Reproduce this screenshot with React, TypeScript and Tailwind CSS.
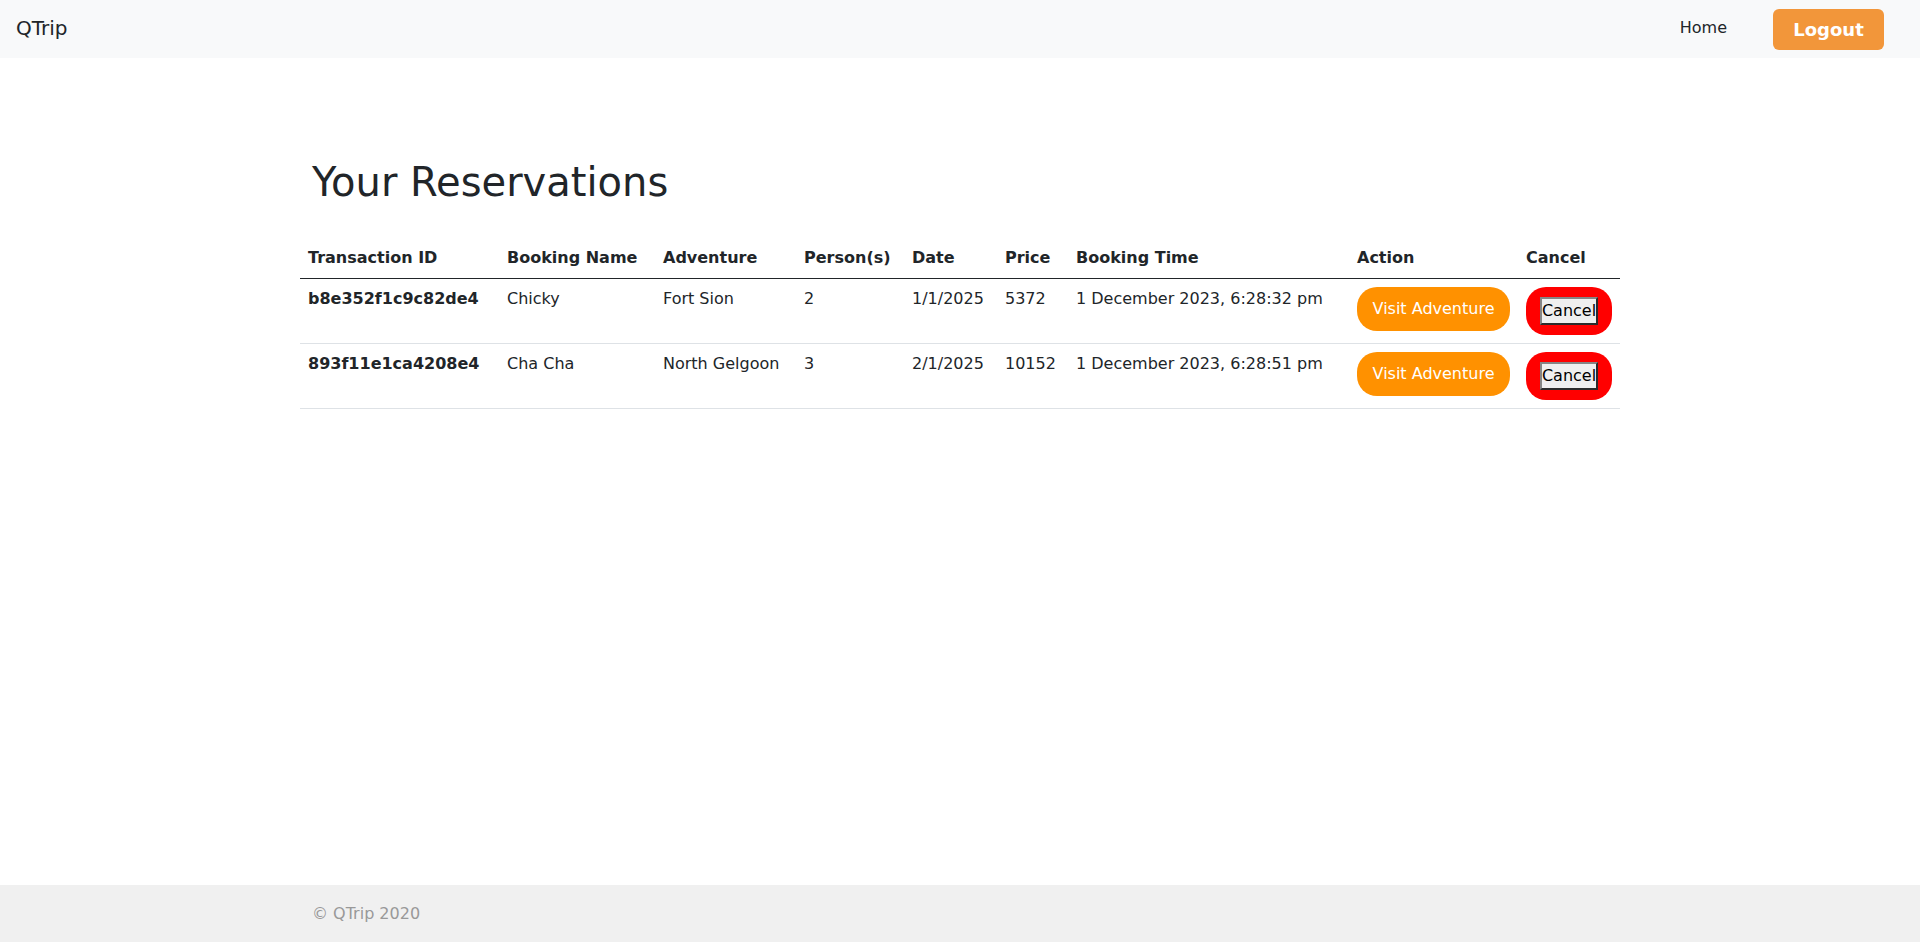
import React from 'react';

interface Reservation {
  id: string;
  name: string;
  adventure: string;
  persons: number;
  date: string;
  price: number;
  time: string;
}

const reservations: Reservation[] = [
  {
    id: 'b8e352f1c9c82de4',
    name: 'Chicky',
    adventure: 'Fort Sion',
    persons: 2,
    date: '1/1/2025',
    price: 5372,
    time: '1 December 2023, 6:28:32 pm',
  },
  {
    id: '893f11e1ca4208e4',
    name: 'Cha Cha',
    adventure: 'North Gelgoon',
    persons: 3,
    date: '2/1/2025',
    price: 10152,
    time: '1 December 2023, 6:28:51 pm',
  },
];

const headers = [
  { label: 'Transaction ID', w: 'w-[199px]' },
  { label: 'Booking Name', w: 'w-[156px]' },
  { label: 'Adventure', w: 'w-[141px]' },
  { label: 'Person(s)', w: 'w-[108px]' },
  { label: 'Date', w: 'w-[93px]' },
  { label: 'Price', w: 'w-[71px]' },
  { label: 'Booking Time', w: 'w-[281px]' },
  { label: 'Action', w: 'w-[169px]' },
  { label: 'Cancel', w: 'w-[102px]' },
];

const App: React.FC = () => {
  return (
    <div
      className="min-h-screen flex flex-col bg-white text-[#212529] text-base leading-6"
      style={{ fontFamily: '"DejaVu Sans", sans-serif' }}
    >
      {/* Navbar */}
      <nav className="h-[58px] bg-[#f8f9fa] flex items-center pl-4 pr-[36px]">
        <a className="text-[20px] leading-[30px] text-[#212529] -mt-[2px]">QTrip</a>
        <div className="ml-auto flex items-center">
          <a className="text-[#212529] mr-[46px] -mt-[2px]">Home</a>
          <button
            type="button"
            className="h-[41px] w-[111px] rounded-md bg-[#f2963a] text-white font-bold text-[18px] leading-[27px]"
          >
            Logout
          </button>
        </div>
      </nav>

      {/* Main */}
      <main className="flex-1">
        <div className="w-[1320px] mx-auto px-3">
          <h1 className="mt-[100px] mb-[32px] text-[40px] leading-[48px] font-normal">Your Reservations</h1>
          <div className="-mx-3">
            <table className="w-[1320px] table-fixed border-collapse text-left">
              <thead>
                <tr className="border-b border-[#212529]">
                  {headers.map((h) => (
                    <th key={h.label} className={`${h.w} px-2 py-2 font-bold align-top whitespace-nowrap`}>
                      {h.label}
                    </th>
                  ))}
                </tr>
              </thead>
              <tbody>
                {reservations.map((r) => (
                  <tr key={r.id} className="border-b border-[#dee2e6]">
                    <th className="px-2 py-2 font-bold align-top">{r.id}</th>
                    <td className="px-2 py-2 align-top">{r.name}</td>
                    <td className="px-2 py-2 align-top whitespace-nowrap">{r.adventure}</td>
                    <td className="px-2 py-2 align-top">{r.persons}</td>
                    <td className="px-2 py-2 align-top">{r.date}</td>
                    <td className="px-2 py-2 align-top">{r.price}</td>
                    <td className="px-2 py-2 align-top">{r.time}</td>
                    <td className="px-2 py-2 align-top">
                      <button
                        type="button"
                        className="h-[44px] w-[153px] rounded-[20px] bg-[#ff9100] text-white leading-6"
                      >
                        Visit Adventure
                      </button>
                    </td>
                    <td className="px-2 py-2 align-top">
                      <div className="inline-flex px-[14px] py-[10px] rounded-[20px] bg-[#ff0000]">
                        <button
                          type="button"
                          className="w-[58px] h-[28px] bg-[#efefef] text-black leading-[24px] border-2 border-t-[#858585] border-l-[#858585] border-b-[#2b2b2b] border-r-[#2b2b2b] flex items-center justify-center overflow-visible"
                        >
                          Cancel
                        </button>
                      </div>
                    </td>
                  </tr>
                ))}
              </tbody>
            </table>
          </div>
        </div>
      </main>

      {/* Footer */}
      <footer className="h-[57px] bg-[#f0f0f0]">
        <div className="w-[1320px] mx-auto px-3 h-full flex items-center">
          <span className="text-[#999999]">© QTrip 2020</span>
        </div>
      </footer>
    </div>
  );
};

export default App;
